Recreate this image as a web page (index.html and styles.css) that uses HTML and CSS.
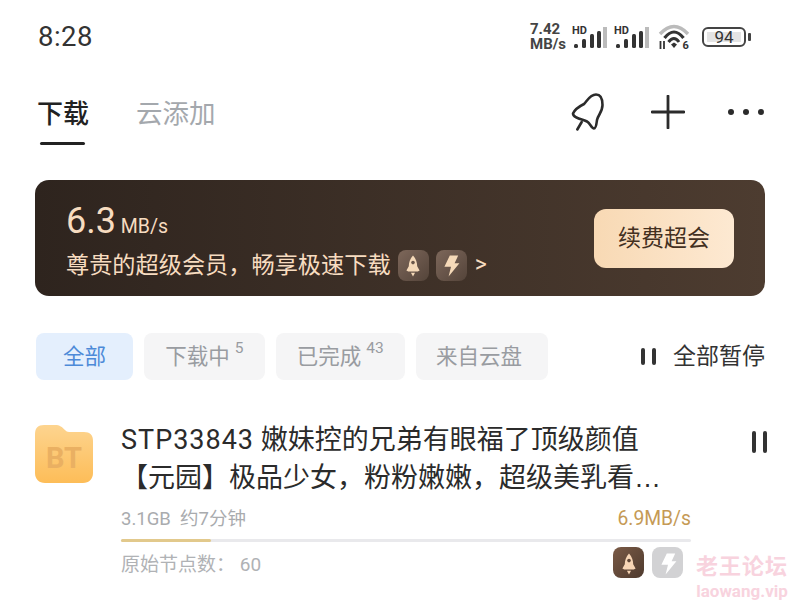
FILE: index.html
```html
<!DOCTYPE html>
<html lang="zh-CN">
<head>
  <meta charset="UTF-8">
  <title>下载</title>
  <link rel="stylesheet" href="styles.css">
</head>
<body>

<!-- Status bar -->
<div class="statusbar">
  <div class="time">8:28</div>
  <div class="status-icons">
    <div class="netspeed"><div>7.42</div><div>MB/s</div></div>
    <svg class="signal" viewBox="0 -3 36 25">
      <text x="0" y="7.5" class="hd">HD</text>
      <rect x="2" y="18" width="4" height="4" rx="1.5" fill="#333"/>
      <rect x="10" y="13" width="4" height="9" rx="1.5" fill="#333"/>
      <rect x="18" y="8" width="4" height="14" rx="1.5" fill="#333"/>
      <rect x="25" y="5" width="4" height="17" rx="1.5" fill="#333"/>
      <rect x="31" y="1" width="4" height="21" fill="#bbb"/>
    </svg>
    <svg class="signal signal-2" viewBox="0 -3 36 25">
      <text x="0" y="7.5" class="hd">HD</text>
      <rect x="2" y="18" width="4" height="4" rx="1.5" fill="#333"/>
      <rect x="10" y="13" width="4" height="9" rx="1.5" fill="#333"/>
      <rect x="18" y="8" width="4" height="14" rx="1.5" fill="#333"/>
      <rect x="25" y="5" width="4" height="17" rx="1.5" fill="#333"/>
      <rect x="31" y="1" width="4" height="21" fill="#bbb"/>
    </svg>
    <svg class="wifi" viewBox="0 0 34 28">
      <path d="M2 10 Q16 -5 30 10" fill="none" stroke="#bbb" stroke-width="3.4"/>
      <path d="M6.5 14 Q16 2 25.5 14" fill="none" stroke="#333" stroke-width="3.2"/>
      <path d="M10.5 18 Q16 11 21 18" fill="none" stroke="#333" stroke-width="3"/>
      <path d="M13 20.5 L16 18.5 L19 20.5 L16 24 Z" fill="#333"/>
      <path d="M2.5 17v8M6 17v8" stroke="#333" stroke-width="1.8"/>
      <text x="24.5" y="25" class="wifi-num">6</text>
    </svg>
    <div class="battery"><span class="battery-level">94</span></div>
    <div class="battery-tip"></div>
  </div>
</div>

<!-- Tabs -->
<div class="tabs">
  <div class="tab tab-on">下载</div>
  <div class="tab">云添加</div>
  <div class="tab-actions">
    <svg class="rocket-line" viewBox="0 0 36 40">
      <path d="M3 21.5 C5 17 10 14 14 12 C17 9 20 2.5 26 2.5 C31 2.5 32.5 7 32.5 13 C32.5 20 28 23 27 28 C26.5 32 26 36.5 24 36.5 C21.5 36.5 20 31 17 29.5 C13 27.5 3 26 3 21.5 Z" fill="none" stroke="#2b2b2b" stroke-width="2.6" stroke-linejoin="round"/>
      <path d="M11.7 30 L7.3 37.5" stroke="#2b2b2b" stroke-width="2.6" stroke-linecap="round"/>
    </svg>
    <svg class="plus" viewBox="0 0 34 34">
      <path d="M1 17H33M17 1V33" stroke="#2b2b2b" stroke-width="2.8" stroke-linecap="round"/>
    </svg>
    <div class="dots"><i></i><i></i><i></i></div>
  </div>
</div>

<!-- Member banner -->
<div class="banner">
  <div class="banner-text">
    <div class="speed"><span class="speed-num">6.3</span> MB/s</div>
    <div class="perks">
      尊贵的超级会员，畅享极速下载
      <span class="perk-icon">
        <svg viewBox="0 0 20 20"><path d="M10 2 C12.5 4.5 13.5 8 13.5 11 L15.5 14.5 L14 15.5 H6 L4.5 14.5 L6.5 11 C6.5 8 7.5 4.5 10 2 Z" fill="#f5d9b8"/><circle cx="10" cy="8" r="1.5" fill="#6b574a"/><path d="M8.3 16.5 H11.7 L10 19.5 Z" fill="#f5d9b8"/></svg>
      </span>
      <span class="perk-icon">
        <svg viewBox="0 0 20 20"><path d="M9 2 H16 L13 8.5 H17 L8 19.5 L10 11.5 H4.5 Z" fill="#f5d9b8"/></svg>
      </span>
      <span class="chevron">&gt;</span>
    </div>
  </div>
  <div class="renew">续费超会</div>
</div>

<!-- Filters -->
<div class="filters">
  <div class="chip chip-on">全部</div>
  <div class="chip">下载中<sup>5</sup></div>
  <div class="chip">已完成<sup>43</sup></div>
  <div class="chip chip-cloud">来自云盘</div>
  <div class="pause-all"><span class="pause-bars"><i></i><i></i></span>全部暂停</div>
</div>

<!-- Task -->
<div class="task">
  <svg class="folder" viewBox="0 0 58 58">
    <defs>
      <linearGradient id="folderFill" x1="0" y1="0" x2="0" y2="1">
        <stop offset="0" stop-color="#fdd48f"/>
        <stop offset="1" stop-color="#fdbd58"/>
      </linearGradient>
    </defs>
    <path d="M0 9 C0 3 3 0 9 0 H20 C25 0 27 2 30 5 C32 7 33 7 36 7 H49 C55 7 58 10 58 16 V48 C58 54 54 58 48 58 H10 C4 58 0 54 0 48 Z" fill="url(#folderFill)"/>
    <text x="29" y="43" class="folder-label">BT</text>
  </svg>
  <div class="task-main">
    <div class="task-title"><span class="task-code">STP33843</span> 嫩妹控的兄弟有眼福了顶级颜值</div>
    <div class="task-title task-title-2">【元园】极品少女，粉粉嫩嫩，超级美乳看<span class="ellipsis">…</span></div>
    <div class="task-meta">
      <span>3.1GB&nbsp; 约7分钟</span>
      <span class="task-speed">6.9MB/s</span>
    </div>
    <div class="progress"><div class="progress-fill" style="width: 15.8%"></div></div>
    <div class="task-foot">
      <span>原始节点数： 60</span>
      <div class="badges">
        <span class="badge badge-rocket">
          <svg viewBox="0 0 20 20"><path d="M10 2 C12.5 4.5 13.5 8 13.5 11 L15.5 14.5 L14 15.5 H6 L4.5 14.5 L6.5 11 C6.5 8 7.5 4.5 10 2 Z" fill="#f7d5b5"/><circle cx="10" cy="8" r="1.5" fill="#5f4636"/><path d="M8.3 16.5 H11.7 L10 19.5 Z" fill="#f7d5b5"/></svg>
        </span>
        <span class="badge badge-bolt">
          <svg viewBox="0 0 20 20"><path d="M9 2 H16 L13 8.5 H17 L8 19.5 L10 11.5 H4.5 Z" fill="#fff"/></svg>
        </span>
      </div>
    </div>
  </div>
  <div class="task-pause"><i></i><i></i></div>
</div>

<div class="watermark">
  <div class="wm-cn">老王论坛</div>
  <div class="wm-en">laowang.vip</div>
</div>

</body>
</html>
```

FILE: styles.css
```css
body {
  font-family: Roboto, "Noto Sans CJK SC", sans-serif;
  background: #fff;
  color: #2b2b2b;
  margin: 0;
  width: 800px;
  height: 604px;
  overflow: hidden;
  position: relative;
}

.statusbar {
  height: 73px;
  display: flex;
  justify-content: space-between;
  align-items: center;
  padding: 0 49px 0 38px;
}

.time {
  font-size: 27.5px;
  letter-spacing: 0.5px;
  color: #333;
}

.status-icons {
  display: flex;
  align-items: center;
}

.netspeed {
  font-size: 15px;
  line-height: 14.5px;
  font-weight: 700;
  color: #444;
  width: 42px;
}

.signal {
  width: 36px;
  height: 25px;
  margin: 0 6px 3px 0;
}

.signal-2 {
  margin-right: 8px;
}

.hd {
  font: 700 11px Roboto, sans-serif;
  fill: #333;
}

.wifi {
  width: 34px;
  height: 28px;
  margin: 3px 10px 0 0;
}

.wifi-num {
  font: 700 11px Roboto, sans-serif;
  fill: #333;
}

.battery {
  width: 34px;
  height: 10px;
  border: 2px solid #444;
  border-radius: 6px;
  padding: 3px;
  display: flex;
}

.battery-level {
  flex: 1;
  background: #e4e4e4;
  font-size: 17px;
  line-height: 10px;
  text-align: center;
  color: #333;
}

.battery-tip {
  width: 3px;
  height: 8px;
  margin-left: 2px;
  background: #444;
  border-radius: 1px;
}

.tabs {
  height: 107px;
  display: flex;
  align-items: flex-start;
  padding: 22px 36px 0 37px;
  box-sizing: border-box;
}

.tab {
  font-size: 26.5px;
  line-height: 38px;
  color: #a4a8ad;
  position: relative;
}

.tab-on {
  font-size: 26px;
  margin-right: 47px;
  color: #222;
  font-weight: 500;
}

.tab-on::after {
  content: "";
  position: absolute;
  left: 3px;
  width: 45px;
  bottom: -12px;
  height: 3px;
  border-radius: 2px;
  background: #222;
}

.tab-actions {
  margin-left: auto;
  margin-top: -3px;
  display: flex;
  align-items: center;
  height: 40px;
}

.rocket-line {
  width: 36px;
  height: 40px;
  margin-right: 45px;
}

.plus {
  width: 34px;
  height: 34px;
  margin-right: 43px;
}

.dots {
  display: flex;
  gap: 9px;
}

.dots i {
  width: 6px;
  height: 6px;
  border-radius: 50%;
  background: #2b2b2b;
}

.banner {
  margin: 0 35px;
  height: 116px;
  border-radius: 14px;
  background: linear-gradient(90deg, #2e241e, #4d3c30);
  display: flex;
  align-items: center;
  justify-content: space-between;
  padding: 0 31px;
}

.banner-text {
  margin-top: 4px;
}

.speed {
  color: #f7dcc0;
  font-size: 19.5px;
  line-height: 48px;
  margin-bottom: -4px;
}

.speed-num {
  font-size: 36px;
}

.perks {
  color: #f7dcc0;
  font-size: 23.2px;
  line-height: 36px;
  display: flex;
  align-items: center;
}

.perk-icon {
  width: 31px;
  height: 31px;
  border-radius: 8px;
  background: linear-gradient(135deg, #7d675a, #54443a);
  margin-left: 7px;
  display: flex;
  align-items: center;
  justify-content: center;
}

.perk-icon svg {
  width: 24px;
  height: 24px;
}

.chevron {
  font-size: 23px;
  margin-left: 8px;
}

.renew {
  width: 140px;
  height: 59px;
  border-radius: 12px;
  background: linear-gradient(90deg, #f8d9b4, #fde9d2);
  color: #43301f;
  font-size: 23px;
  line-height: 59px;
  text-align: center;
}

.filters {
  margin: 37px 35px 0 36px;
  display: flex;
  align-items: center;
  gap: 11.25px;
}

.chip {
  height: 47px;
  line-height: 48px;
  padding: 0 21px;
  border-radius: 8px;
  background: #f5f5f6;
  color: #999ca1;
  font-size: 21.5px;
  white-space: nowrap;
}

.chip-on {
  padding: 0 27px;
  background: #e4effd;
  color: #4d8ad8;
}

.chip-cloud {
  padding: 0 26px 0 20px;
}

.chip sup {
  font-size: 15.5px;
  line-height: 0;
  margin-left: 5px;
  vertical-align: 11px;
}

.pause-all {
  margin-left: auto;
  display: flex;
  align-items: center;
  font-size: 23px;
  line-height: 47px;
  color: #333;
}

.pause-bars {
  display: flex;
  gap: 7px;
  margin-right: 17px;
}

.pause-bars i {
  width: 4px;
  height: 17px;
  background: #333;
  border-radius: 2px;
}

.task {
  margin: 45px 35px 0;
  display: flex;
  align-items: flex-start;
}

.folder {
  width: 58px;
  height: 58px;
  margin-right: 28px;
  flex: none;
}

.folder-label {
  font: 700 29px Roboto, sans-serif;
  fill: #eab062;
  text-anchor: middle;
}

.task-main {
  width: 570px;
  flex: none;
}

.task-title {
  font-size: 27px;
  line-height: 38px;
  color: #2b2b2b;
  white-space: nowrap;
  margin-top: -4px;
}

.task-title-2 {
  margin-top: 0;
}

.task-code {
  letter-spacing: 1px;
}

.ellipsis {
  font-family: "Liberation Sans", sans-serif;
}

.task-meta {
  margin-top: 9px;
  display: flex;
  justify-content: space-between;
  font-size: 18.5px;
  line-height: 26px;
  color: #a9abae;
}

.task-speed {
  font-size: 19.3px;
  color: #c59a55;
}

.progress {
  margin-top: 7px;
  height: 3px;
  border-radius: 2px;
  background: #e9e9ec;
}

.progress-fill {
  height: 100%;
  background: #e2c98c;
  border-radius: 2px;
}

.task-foot {
  margin-top: 5px;
  display: flex;
  justify-content: space-between;
  align-items: center;
  font-size: 19px;
  color: #b0b2b5;
}

.badges {
  display: flex;
  gap: 8px;
  margin-right: 8px;
}

.badge {
  width: 31px;
  height: 31px;
  border-radius: 8px;
  display: flex;
  align-items: center;
  justify-content: center;
}

.badge svg {
  width: 24px;
  height: 24px;
}

.badge-rocket {
  background: linear-gradient(135deg, #7a5a46, #4e3a2e);
}

.badge-bolt {
  background: #d2d2d4;
}

.task-pause {
  margin-left: 61px;
  margin-top: 6px;
  flex: none;
  display: flex;
  gap: 7px;
}

.task-pause i {
  width: 4px;
  height: 22px;
  background: #333;
  border-radius: 2px;
}

.watermark {
  position: absolute;
  left: 696px;
  top: 553px;
  text-align: center;
  color: #f8d3de;
  font-weight: 700;
}

.wm-cn {
  font-size: 22px;
  line-height: 28px;
  letter-spacing: 1px;
}

.wm-en {
  font-size: 17px;
  line-height: 20px;
}
```
